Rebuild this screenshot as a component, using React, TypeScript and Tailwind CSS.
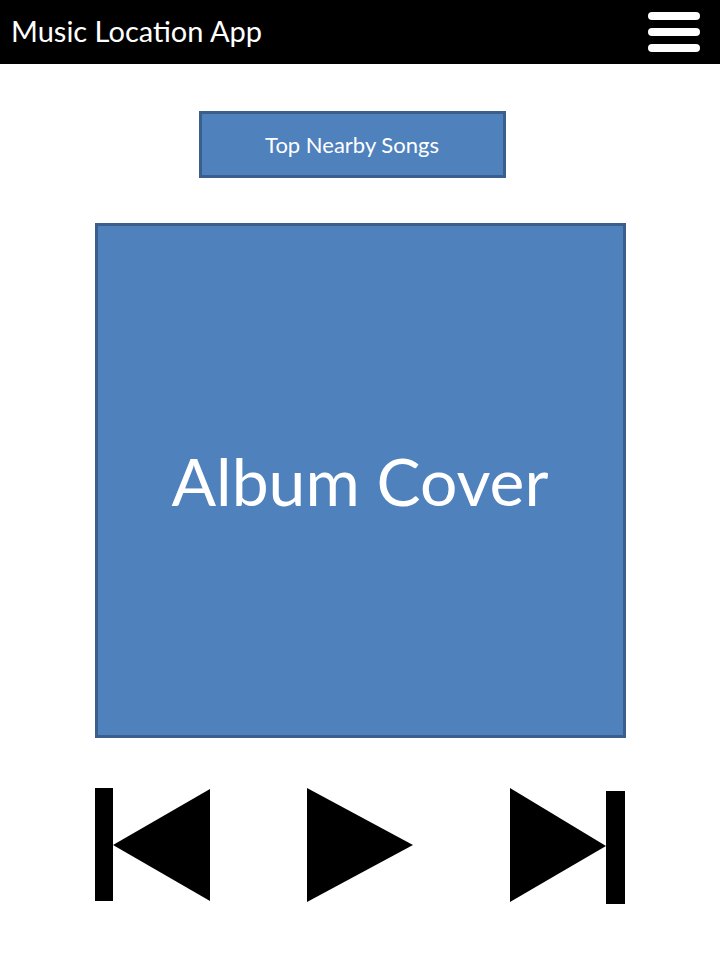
import React from "react";

const PrevIcon = () => (
  <svg width="116" height="114" viewBox="0 0 116 114">
    <rect x="0" y="0" width="18" height="113" fill="#000" />
    <polygon points="18,57 115,1 115,113" fill="#000" />
  </svg>
);

const PlayIcon = () => (
  <svg width="107" height="115" viewBox="0 0 107 115">
    <polygon points="0,0 106,57 0,114" fill="#000" />
  </svg>
);

const NextIcon = () => (
  <svg width="116" height="116" viewBox="0 0 116 116">
    <polygon points="0,0 96,58 0,114" fill="#000" />
    <rect x="96" y="3" width="19" height="113" fill="#000" />
  </svg>
);

export default function App() {
  return (
    <div className="w-[720px] h-[960px] bg-white font-['Lato',sans-serif]">
      <div className="h-16 bg-black flex items-center justify-between pl-[11px] pr-5">
        <span className="text-white text-[29px] leading-none mb-[3px]">
          Music Location App
        </span>
        <div className="flex flex-col gap-2">
          <div className="w-[52px] h-2 rounded-sm bg-white" />
          <div className="w-[52px] h-2 rounded-sm bg-white" />
          <div className="w-[52px] h-2 rounded-sm bg-white" />
        </div>
      </div>

      <div className="flex flex-col items-center">
        <button className="mt-[47px] mr-4 w-[307px] h-[67px] bg-[#4f81bd] border-[3px] border-[#3a5f8c] text-white text-[22px] flex items-center justify-center">
          Top Nearby Songs
        </button>

        <div className="mt-[45px] w-[531px] h-[515px] bg-[#4f81bd] border-[3px] border-[#3a5f8c] flex items-center justify-center">
          <span className="text-white text-[66px] leading-none">Album Cover</span>
        </div>

        <div className="mt-[50px] w-[531px] flex items-start justify-between">
          <PrevIcon />
          <PlayIcon />
          <NextIcon />
        </div>
      </div>
    </div>
  );
}
